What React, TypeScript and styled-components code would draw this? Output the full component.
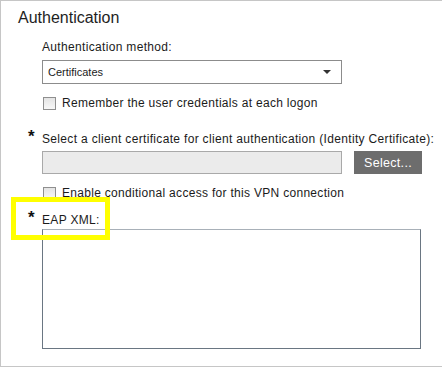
import { createGlobalStyle } from "styled-components"
import styled from "styled-components"

const GlobalStyle = createGlobalStyle`
  html, body {
    margin: 0;
    padding: 0;
    background: #fff;
  }
  body {
    font-family: "Liberation Sans", Arial, sans-serif;
    color: #1b1b1b;
  }
`

const Panel = styled.div`
  position: relative;
  box-sizing: border-box;
  width: 442px;
  height: 367px;
  border-top: 1px solid #c6c6c6;
  border-left: 1px solid #c6c6c6;
  border-bottom: 1px solid #c6c6c6;
  padding: 7px 0 0 17px;
`

const Title = styled.h2`
  margin: 0;
  font-size: 16px;
  font-weight: normal;
  line-height: 20px;
  color: #1e1e1e;
`

const Body = styled.div`
  display: flex;
  flex-direction: column;
  padding-left: 24px;
`

const Label = styled.div<{ $top: number }>`
  display: flex;
  align-items: flex-start;
  margin-top: ${(p) => p.$top}px;
  font-size: 12px;
  line-height: 16px;
  letter-spacing: 0.33px;
  white-space: nowrap;
`

const Star = styled.span`
  width: 14px;
  margin-left: -14px;
  font-size: 17px;
  font-weight: bold;
  line-height: 12px;
  color: #111;
`

const SelectBox = styled.div`
  box-sizing: border-box;
  display: flex;
  align-items: center;
  justify-content: space-between;
  width: 300px;
  height: 24px;
  margin-top: 5px;
  padding: 0 10px 0 5px;
  border: 1px solid #8c8c8c;
  background: #fff;
  font-size: 11px;
`

const Arrow = styled.span`
  width: 0;
  height: 0;
  border-left: 4px solid transparent;
  border-right: 4px solid transparent;
  border-top: 4px solid #333;
`

const CheckRow = styled.label<{ $top: number }>`
  display: flex;
  align-items: center;
  gap: 6px;
  margin-top: ${(p) => p.$top}px;
  margin-left: 1px;
  font-size: 12px;
  line-height: 16px;
  letter-spacing: 0.3px;
  white-space: nowrap;
`

const Box = styled.span`
  box-sizing: border-box;
  width: 13px;
  height: 13px;
  border: 1px solid #8f8f8f;
  background: linear-gradient(#e4e4e4, #f8f8f8);
`

const PickRow = styled.div`
  display: flex;
  gap: 12px;
  margin-top: 4px;
`

const TextField = styled.div`
  box-sizing: border-box;
  width: 300px;
  height: 23px;
  border: 1px solid #a9a9a9;
  background: #ebebeb;
`

const Button = styled.button`
  box-sizing: border-box;
  width: 68px;
  height: 23px;
  border: none;
  background: #6d6d6d;
  color: #fff;
  font-family: inherit;
  font-size: 12.5px;
  letter-spacing: 0.3px;
  padding: 0;
`

const TextArea = styled.div`
  box-sizing: border-box;
  width: 379px;
  height: 120px;
  margin-top: 1px;
  border: 1px solid #6a7682;
  border-top-color: #a8b0b8;
  background: #fff;
`

const Highlight = styled.div`
  position: absolute;
  left: 10px;
  top: 196px;
  width: 99px;
  height: 43px;
  box-sizing: border-box;
  border: 5px solid #ffff00;
`

export default function App() {
  return (
    <>
      <GlobalStyle />
      <Panel>
        <Title>Authentication</Title>
        <Body>
          <Label $top={11}>Authentication method:</Label>
          <SelectBox>
            <span>Certificates</span>
            <Arrow />
          </SelectBox>
          <CheckRow $top={11}>
            <Box />
            Remember the user credentials at each logon
          </CheckRow>
          <Label $top={20}>
            <Star>*</Star>
            Select a client certificate for client authentication (Identity Certificate):
          </Label>
          <PickRow>
            <TextField />
            <Button>Select...</Button>
          </PickRow>
          <CheckRow $top={11}>
            <Box />
            Enable conditional access for this VPN connection
          </CheckRow>
          <Label $top={11}>
            <Star>*</Star>
            EAP XML:
          </Label>
        </Body>
        <Body>
          <TextArea />
        </Body>
        <Highlight />
      </Panel>
    </>
  )
}
